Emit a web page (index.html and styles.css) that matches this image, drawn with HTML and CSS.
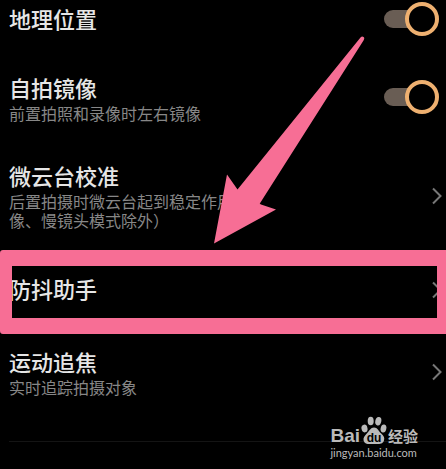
FILE: index.html
```html
<!DOCTYPE html>
<html lang="zh-CN">
<head>
<meta charset="UTF-8">
<meta name="viewport" content="width=device-width, initial-scale=1.0">
<title>相机设置</title>
<link rel="stylesheet" href="styles.css">
</head>
<body>

<main class="settings">
    <div class="row row-first">
        <label class="text" for="location"><span class="name">地理位置</span></label>
        <input class="switch" type="checkbox" id="location" checked>
    </div>
    <div class="row">
        <label class="text" for="mirror">
            <span class="name">自拍镜像</span>
            <span class="desc">前置拍照和录像时左右镜像</span>
        </label>
        <input class="switch" type="checkbox" id="mirror" checked>
    </div>
    <a class="row" href="#gimbal">
        <span class="text">
            <span class="name">微云台校准</span>
            <span class="desc">后置拍摄时微云台起到稳定作用（人像、慢镜头模式除外）</span>
        </span>
        <svg class="chevron" viewBox="0 0 10 18"><path d="M1 1.5L8.5 9L1 16.5"/></svg>
    </a>
    <a class="row row-marked" href="#steady">
        <span class="text"><span class="name">防抖助手</span></span>
        <svg class="chevron" viewBox="0 0 10 18"><path d="M1 1.5L8.5 9L1 16.5"/></svg>
        <span class="marker"></span>
    </a>
    <a class="row" href="#focus">
        <span class="text">
            <span class="name">运动追焦</span>
            <span class="desc">实时追踪拍摄对象</span>
        </span>
        <svg class="chevron" viewBox="0 0 10 18"><path d="M1 1.5L8.5 9L1 16.5"/></svg>
    </a>
    <hr class="divider">
</main>

<!-- arrow pointing at the marked row -->
<svg class="arrow" viewBox="0 0 152 208">
    <path d="M0 207.500L13 138.500L23.500 153.500L146.500 1.500Q148 0 149.500 1Q151 2 149.500 4.500L45.500 168L62 173.500Z"/>
</svg>

<div class="watermark">
    <div class="brand">
        <span class="bai">Bai</span>
        <svg class="paw" viewBox="0 0 26 29">
            <ellipse cx="3.500" cy="12.500" rx="3" ry="3.900" transform="rotate(-12 3.500 12.500)"/>
            <ellipse cx="9.700" cy="5" rx="3" ry="4.300"/>
            <ellipse cx="17.300" cy="5.200" rx="3" ry="4.300" transform="rotate(12 17.300 5.200)"/>
            <ellipse cx="22.500" cy="12.500" rx="2.800" ry="4" transform="rotate(14 22.500 12.500)"/>
            <path d="M13 11.500C16.500 11.500 17.500 15 20 17.300C23 20 24 22 22.800 25C21.500 28.500 17.500 28 13 28C8.500 28 4 29 2.700 25C1.800 22 3.500 20 6 17.300C8.500 14.800 9.500 11.500 13 11.500Z"/>
            <text x="13" y="26" text-anchor="middle">du</text>
        </svg>
        <span class="jingyan">经验</span>
    </div>
    <div class="site">jingyan.baidu.com</div>
</div>

</body>
</html>
```
FILE: styles.css
```css
body {
    margin: 0;
    min-height: 100vh;
    position: relative;
    overflow: hidden;
    background-color: #000;
    color: #e6e6e6;
    font-family: "Noto Sans CJK SC", sans-serif;
}
.row {
    display: flex;
    align-items: center;
    justify-content: space-between;
    padding: 19px 4px 19px 9px;
    color: inherit;
    text-decoration: none;
}
.row-first {
    padding-top: 4px;
}
.row-marked {
    position: relative;
    padding-top: 25px;
    padding-bottom: 23px;
}
.text {
    max-width: 264px;
}
.name {
    display: block;
    padding-bottom: 2px;
    font-size: 22px;
    font-weight: 500;
    line-height: 29px;
}
.desc {
    display: block;
    font-size: 16px;
    line-height: 19px;
    color: #878787;
}

/* switch: short track with a big ring at its end */
.switch {
    appearance: none;
    display: flex;
    align-items: center;
    margin: -3px 3px -1px 0;
    width: 55px;
    height: 34px;
}
.switch::before {
    content: "";
    width: 24px;
    height: 18px;
    border-radius: 9px 0 0 9px;
    background-color: #695d54;
}
.switch::after {
    content: "";
    box-sizing: border-box;
    width: 34px;
    height: 34px;
    margin-left: -3px;
    border: 4px solid #eeb070;
    border-radius: 50%;
    background-color: #000;
}
.chevron {
    width: 10px;
    height: 18px;
    fill: none;
    stroke: #777;
    stroke-width: 2;
}
.divider {
    margin: 25px 0 0 9px;
    border: 0;
    border-top: 1px solid #141414;
}

/* pink marks over the list */
.marker {
    position: absolute;
    inset: 1px 0 -6px 0;
    border: solid #f76e95;
    border-width: 16px 9px 16px 12px;
    border-radius: 3px 0 0 3px;
}
.arrow {
    position: absolute;
    top: 36px;
    left: 214px;
    width: 152px;
    height: 208px;
    fill: #f76e95;
    pointer-events: none;
}

.watermark {
    position: absolute;
    right: 28px;
    bottom: 9px;
    color: #bababa;
}
.brand {
    display: flex;
    align-items: flex-end;
    gap: 1px;
}
.bai {
    font-family: "Liberation Sans", sans-serif;
    font-size: 19px;
    font-weight: bold;
    line-height: 19px;
}
.paw {
    width: 26px;
    height: 29px;
    fill: #bababa;
}
.paw text {
    font-family: "Liberation Sans", sans-serif;
    font-size: 12px;
    font-weight: bold;
    fill: #000;
}
.jingyan {
    font-size: 15px;
    font-weight: bold;
    line-height: 19px;
}
.site {
    font-family: Lato, sans-serif;
    font-size: 11px;
    line-height: 15px;
}
```
